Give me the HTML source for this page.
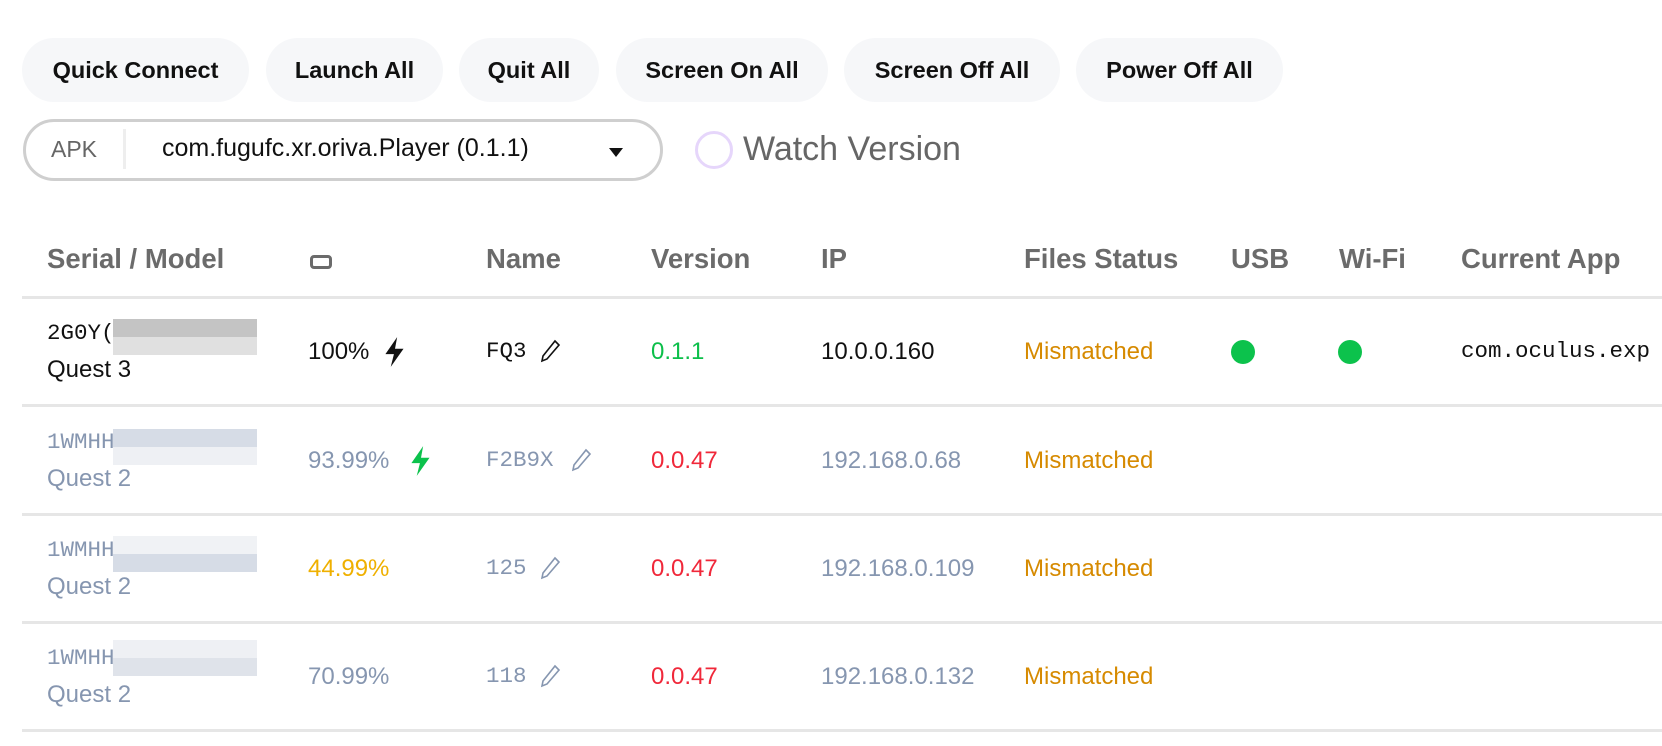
<!DOCTYPE html>
<html><head><meta charset="utf-8"><style>
*{margin:0;padding:0;box-sizing:border-box}
body{width:1662px;height:746px;background:#fff;position:relative;overflow:hidden;font-family:"Liberation Sans",sans-serif}
.a{position:absolute;white-space:nowrap}
.btn{position:absolute;top:38px;height:64px;border-radius:32px;background:#f6f7f9;font-weight:bold;font-size:23.5px;color:#111;display:flex;align-items:center;justify-content:center}
.h{position:absolute;top:243px;font-weight:bold;font-size:27.5px;color:#6b6b6b}
.line{position:absolute;left:22px;right:0;height:3px;background:#e6e6e6}
.mono{font-family:"Liberation Mono",monospace;font-size:22.5px!important}
.t{font-size:24px}
.g{color:#8696b0}
.blur{position:absolute;width:144px;height:36px}
.dot{position:absolute;width:24px;height:24px;border-radius:50%;background:#0cc24c}
</style></head><body>
<div class="btn" style="left:22px;width:227px">Quick Connect</div>
<div class="btn" style="left:266px;width:177px">Launch All</div>
<div class="btn" style="left:459px;width:140px">Quit All</div>
<div class="btn" style="left:616px;width:212px">Screen On All</div>
<div class="btn" style="left:844px;width:216px">Screen Off All</div>
<div class="btn" style="left:1076px;width:207px">Power Off All</div>

<div class="a" style="left:23px;top:119px;width:640px;height:62px;border:3px solid #cfcfcf;border-radius:31px"></div>
<div class="a" style="left:51px;top:136px;font-size:23px;color:#666">APK</div>
<div class="a" style="left:123px;top:129px;width:3px;height:40px;background:#eee"></div>
<div class="a" style="left:162px;top:134px;font-size:25px;color:#111">com.fugufc.xr.oriva.Player (0.1.1)</div>
<div class="a" style="left:609px;top:148px;width:0;height:0;border-left:7px solid transparent;border-right:7px solid transparent;border-top:9px solid #111"></div>
<div class="a" style="left:695px;top:131px;width:38px;height:38px;border:3px solid #e6d6fb;border-radius:50%"></div>
<div class="a" style="left:743px;top:130px;font-size:34px;color:#666">Watch Version</div>

<div class="h" style="left:47px">Serial / Model</div>
<div class="a" style="left:310px;top:255px;width:22px;height:14px;border:3px solid #6b6b6b;border-radius:4px"></div>
<div class="h" style="left:486px">Name</div>
<div class="h" style="left:651px">Version</div>
<div class="h" style="left:821px">IP</div>
<div class="h" style="left:1024px">Files Status</div>
<div class="h" style="left:1231px">USB</div>
<div class="h" style="left:1339px">Wi-Fi</div>
<div class="h" style="left:1461px">Current App</div>
<div class="line" style="top:296px"></div>
<div class="line" style="top:404px"></div>
<div class="line" style="top:513px"></div>
<div class="line" style="top:621px"></div>
<div class="line" style="top:729px"></div>

<!-- row1 -->
<div class="a mono t" style="left:47px;top:320px;color:#111">2G0Y(</div>
<div class="blur" style="left:113px;top:319px;background:linear-gradient(#c4c4c4 50%,#e0e0e0 50%)"></div>
<div class="a t" style="left:47px;top:356px;color:#111">Quest 3</div>
<div class="a t" style="left:308px;top:338px;color:#111">100%</div>
<svg class="a" style="left:382px;top:336px" width="26" height="32" viewBox="0 0 24 30"><path d="M14 1 3 17h8l-3 12 12-17h-8z" fill="#111"/></svg>
<div class="a mono t" style="left:486px;top:338px;color:#111">FQ3</div>
<svg class="a" style="left:539px;top:339px" width="22" height="24" viewBox="0 0 22 24" fill="none" stroke="#111" stroke-width="1.6"><path d="M16 2l4 4L8 20l-5 2 1-5z"/></svg>
<div class="a t" style="left:651px;top:338px;color:#0cbf4a">0.1.1</div>
<div class="a t" style="left:821px;top:338px;color:#111">10.0.0.160</div>
<div class="a t" style="left:1024px;top:338px;color:#d68a00">Mismatched</div>
<div class="dot" style="left:1231px;top:340px"></div>
<div class="dot" style="left:1338px;top:340px"></div>
<div class="a mono t" style="left:1461px;top:338px;color:#111">com.oculus.exp</div>

<!-- rows 2-4 -->
<div class="a mono t g" style="left:47px;top:429px">1WMHH</div>
<div class="blur" style="left:113px;top:429px;background:linear-gradient(#d6dce6 50%,#eef0f4 50%)"></div>
<div class="a t g" style="left:47px;top:465px">Quest 2</div>
<div class="a t g" style="left:308px;top:447px">93.99%</div>
<svg class="a" style="left:408px;top:445px" width="26" height="32" viewBox="0 0 24 30"><path d="M14 1 3 17h8l-3 12 12-17h-8z" fill="#0cc24c"/></svg>
<div class="a mono t g" style="left:486px;top:447px">F2B9X</div>
<svg class="a" style="left:570px;top:448px" width="22" height="24" viewBox="0 0 22 24" fill="none" stroke="#8696b0" stroke-width="1.6"><path d="M16 2l4 4L8 20l-5 2 1-5z"/></svg>
<div class="a t" style="left:651px;top:447px;color:#f0283a">0.0.47</div>
<div class="a t g" style="left:821px;top:447px">192.168.0.68</div>
<div class="a t" style="left:1024px;top:447px;color:#d68a00">Mismatched</div>

<div class="a mono t g" style="left:47px;top:537px">1WMHH</div>
<div class="blur" style="left:113px;top:536px;background:linear-gradient(#f0f2f5 50%,#d6dce6 50%)"></div>
<div class="a t g" style="left:47px;top:573px">Quest 2</div>
<div class="a t" style="left:308px;top:555px;color:#efb000">44.99%</div>
<div class="a mono t g" style="left:486px;top:555px">125</div>
<svg class="a" style="left:539px;top:556px" width="22" height="24" viewBox="0 0 22 24" fill="none" stroke="#8696b0" stroke-width="1.6"><path d="M16 2l4 4L8 20l-5 2 1-5z"/></svg>
<div class="a t" style="left:651px;top:555px;color:#f0283a">0.0.47</div>
<div class="a t g" style="left:821px;top:555px">192.168.0.109</div>
<div class="a t" style="left:1024px;top:555px;color:#d68a00">Mismatched</div>

<div class="a mono t g" style="left:47px;top:645px">1WMHH</div>
<div class="blur" style="left:113px;top:640px;background:linear-gradient(#eef0f4 50%,#dfe3ea 50%)"></div>
<div class="a t g" style="left:47px;top:681px">Quest 2</div>
<div class="a t g" style="left:308px;top:663px">70.99%</div>
<div class="a mono t g" style="left:486px;top:663px">118</div>
<svg class="a" style="left:539px;top:664px" width="22" height="24" viewBox="0 0 22 24" fill="none" stroke="#8696b0" stroke-width="1.6"><path d="M16 2l4 4L8 20l-5 2 1-5z"/></svg>
<div class="a t" style="left:651px;top:663px;color:#f0283a">0.0.47</div>
<div class="a t g" style="left:821px;top:663px">192.168.0.132</div>
<div class="a t" style="left:1024px;top:663px;color:#d68a00">Mismatched</div>
</body></html>
